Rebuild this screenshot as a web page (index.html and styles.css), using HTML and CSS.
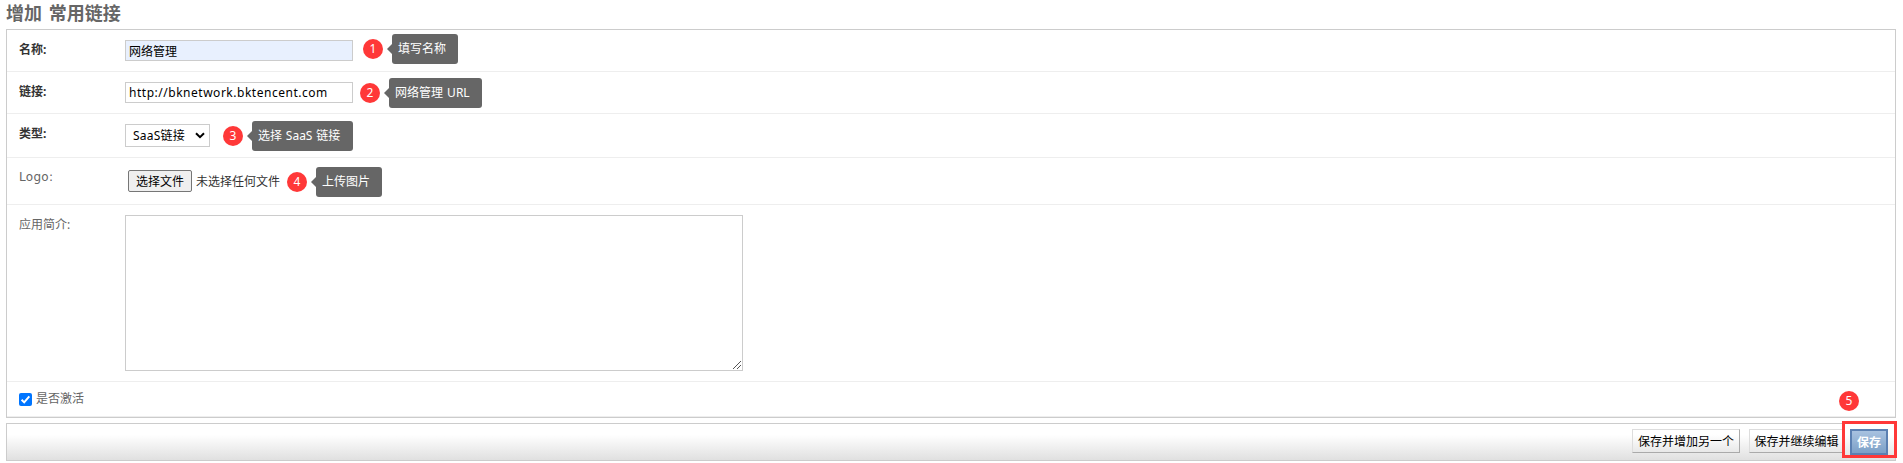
FILE: index.html
```html
<!DOCTYPE html>
<html lang="zh-CN">
<head>
<meta charset="utf-8">
<title>增加 常用链接</title>
<link rel="stylesheet" href="styles.css">
</head>
<body>
<h1 class="title">增加 常用链接</h1>
<form class="form">
  <div class="module">
    <div class="row row-name">
      <label class="label required">名称:</label>
      <input class="text filled" type="text" value="网络管理">
      <span class="badge b1">1</span><span class="tip t1">填写名称</span>
    </div>
    <div class="row row-link">
      <label class="label required">链接:</label>
      <input class="text url" type="text" value="http://bknetwork.bktencent.com" spellcheck="false">
      <span class="badge b2">2</span><span class="tip t2">网络管理 URL</span>
    </div>
    <div class="row row-type">
      <label class="label required">类型:</label>
      <span class="select-wrap">
        <select class="select"><option>SaaS链接</option></select>
        <svg class="chevron" viewBox="0 0 10 7" width="10" height="7"><path d="M1 1.2 5 5.2 9 1.2" fill="none" stroke="#000" stroke-width="2"/></svg>
      </span>
      <span class="badge b3">3</span><span class="tip t3">选择 SaaS 链接</span>
    </div>
    <div class="row row-logo">
      <label class="label latin">Logo:</label>
      <button class="file" type="button">选择文件</button><span class="file-name">未选择任何文件</span>
      <span class="badge b4">4</span><span class="tip t4">上传图片</span>
    </div>
    <div class="row row-intro">
      <label class="label">应用简介:</label>
      <div class="area-wrap">
        <textarea class="area"></textarea>
        <svg class="grip" viewBox="0 0 8 8" width="8" height="8" shape-rendering="crispEdges"><path d="M0 7h1v1H0zM1 6h1v1H1zM2 5h1v1H2zM3 4h1v1H3zM4 3h1v1H4zM5 2h1v1H5zM6 1h1v1H6zM7 0h1v1H7zM4 7h1v1H4zM5 6h1v1H5zM6 5h1v1H6zM7 4h1v1H7z" fill="#555"/></svg>
      </div>
    </div>
    <div class="row row-active">
      <span class="check"><svg viewBox="0 0 13 13" width="13" height="13"><path d="M2.6 6.8 5.2 9.4 10.3 3.4" fill="none" stroke="#fff" stroke-width="2"/></svg></span>
      <label class="check-label">是否激活</label>
      <span class="badge b5">5</span>
    </div>
  </div>
  <div class="submit-row">
    <button class="btn another" type="button">保存并增加另一个</button>
    <button class="btn continue" type="button">保存并继续编辑</button>
    <span class="save-wrap"><button class="save" type="button">保存</button><span class="marker"></span></span>
  </div>
</form>
</body>
</html>
```
FILE: styles.css
```css
* { box-sizing: border-box; }
body {
  margin: 0;
  height: 463px;
  overflow: hidden;
  background: #fff;
  color: #333;
  font: 12px/16px "Noto Sans", "Noto Sans CJK SC", sans-serif;
}
input, button, select, textarea { font: inherit; color: #000; margin: 0; }
.title {
  margin: 0;
  height: 29px;
  padding: 1px 0 0 6px;
  font-size: 18px;
  line-height: 24px;
  font-weight: bold;
  word-spacing: 2px;
  color: #666;
}
.form { margin: 0 7px 0 6px; }
.module { border: 1px solid #ccc; }
.row {
  display: flex;
  align-items: flex-start;
  padding-left: 12px;
  border-bottom: 1px solid #eee;
}
.row-name, .row-link { height: 42px; }
.row-type { height: 44px; }
.row-logo { height: 47px; }
.row-intro { height: 177px; }
.row-active { height: 35px; }
.label { width: 106px; flex: none; margin-top: 12px; color: #666; }
.required { color: #333; font-weight: bold; }
.latin { margin-top: 11px; font-family: "DejaVu Sans", sans-serif; letter-spacing: 0.3px; }
.text {
  width: 228px;
  height: 21px;
  margin-top: 10px;
  padding: 0 3px;
  border: 1px solid #ccc;
  background: #fff;
}
.filled { background: #e8f0fe; }
.url { font-size: 12px; letter-spacing: 0.52px; padding-bottom: 1px; }
.badge {
  flex: none;
  width: 20px;
  height: 20px;
  border-radius: 50%;
  background: #ff3838;
  color: #fff;
  line-height: 20px;
  text-align: center;
}
.tip {
  position: relative;
  flex: none;
  height: 30px;
  padding-left: 6px;
  border-radius: 3px;
  background: #666;
  color: #fff;
  line-height: 29px;
  white-space: nowrap;
}
.tip::before {
  content: "";
  position: absolute;
  left: -5px;
  top: 10px;
  border: 5px solid transparent;
  border-left: 0;
  border-right-color: #666;
}
.b1 { margin: 9px 0 0 10px; }
.t1 { width: 66px; margin: 4px 0 0 9px; }
.b2 { margin: 11px 0 0 7px; }
.t2 { width: 93px; margin: 6px 0 0 9px; word-spacing: 1px; }
.b3 { margin: 12px 0 0 13px; }
.t3 { width: 101px; margin: 7px 0 0 9px; word-spacing: 0.7px; }
.b4 { margin: 14px 0 0 7px; }
.t4 { width: 66px; margin: 9px 0 0 9px; }
.b5 { margin: 9px 36px 0 auto; }
.select-wrap { position: relative; width: 85px; height: 23px; margin-top: 10px; }
.select {
  display: block;
  width: 85px;
  height: 23px;
  padding: 0 0 0 7px;
  appearance: none;
  border: 1px solid #ccc;
  border-radius: 0;
  background: #fff;
  letter-spacing: 0.2px;
}
.chevron { position: absolute; left: 70px; top: 8px; }
.file {
  width: 64px;
  height: 22px;
  margin: 12px 0 0 3px;
  padding: 1px 0 0;
  border: 1px solid #767676;
  border-radius: 2px;
  background: #efefef;
  white-space: nowrap;
}
.file-name { width: 84px; margin: 16px 0 0 4px; white-space: nowrap; }
.area-wrap { position: relative; width: 618px; height: 156px; margin-top: 10px; }
.area {
  display: block;
  width: 618px;
  height: 156px;
  border: 1px solid #ccc;
  resize: none;
}
.grip { position: absolute; right: 2px; bottom: 2px; }
.check {
  width: 13px;
  height: 13px;
  margin-top: 11px;
  border-radius: 2px;
  background: #0075ff;
}
.check svg { display: block; }
.check-label { margin: 9px 0 0 4px; color: #666; }
.submit-row {
  display: flex;
  align-items: flex-start;
  justify-content: flex-end;
  height: 38px;
  margin-top: 5px;
  padding: 5px 7px 0 0;
  border: 1px solid #ccc;
  background: linear-gradient(#fff 30%, #e0e0e0);
}
.btn {
  height: 24px;
  padding: 2px 0 0;
  border: 1px solid;
  border-color: #ddd #aaa #aaa #ddd;
  background: linear-gradient(#fff 20%, #e8e8e8);
  white-space: nowrap;
}
.another { width: 108px; margin-right: 9px; }
.continue { width: 95px; margin-right: 6px; }
.save-wrap { position: relative; }
.save {
  display: block;
  width: 38px;
  height: 26px;
  padding: 2px 0 0;
  border: 2px solid #5b80b2;
  background: linear-gradient(#a8c2e0, #7ca0c7);
  color: #fff;
  font-weight: bold;
}
.marker {
  position: absolute;
  left: -8px;
  top: -8px;
  width: 55px;
  height: 37px;
  border: 3px solid #ff3838;
}
```
